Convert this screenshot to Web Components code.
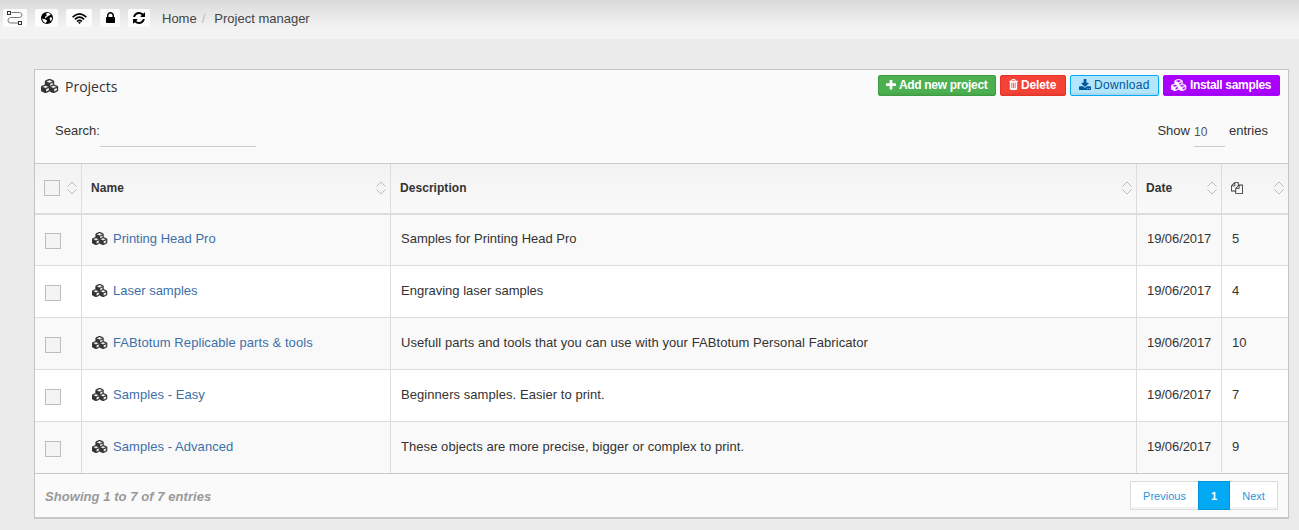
<!DOCTYPE html>
<html lang="en">
<head>
<meta charset="utf-8">
<title>Project manager</title>
<style>
html,body{margin:0;height:100%}
body{background:#ebebeb;font:13px "Liberation Sans",Arial,sans-serif;color:#333;overflow:hidden}
</style>
</head>
<body>
<project-page></project-page>
<script>
const CUBES='M640 1632l384-192v-314l-384 164v342zm-64-454l404-173-404-173-404 173zm1088 454l384-192v-314l-384 164v342zm-64-454l404-173-404-173-404 173zm-448-293l384-165v-266l-384 164v267zm-64-379l441-189-441-189-441 189zm1088 518v416q0 36-19 67t-52 47l-448 224q-25 14-57 14t-57-14l-448-224q-5-2-7-4-2 2-7 4l-448 224q-25 14-57 14t-57-14l-448-224q-33-16-52-47t-19-67v-416q0-38 21.500-70t56.500-48l434-186v-400q0-38 21.500-70t56.500-48l448-192q23-10 50-10t50 10l448 192q35 16 56.500 48t21.500 70v400l434 186q36 16 57 48t21 70z';
const ICONS={
cubes:['0 0 2304 1792',`<path stroke="currentColor" stroke-width="50" d="${CUBES}"/>`],
plus:['192 192 1408 1408','<path d="M1600 736v192q0 40-28 68t-68 28h-416v416q0 40-28 68t-68 28h-192q-40 0-68-28t-28-68v-416h-416q-40 0-68-28t-28-68v-192q0-40 28-68t68-28h416v-416q0-40 28-68t68-28h192q40 0 68 28t28 68v416h416q40 0 68 28t28 68z"/>'],
trash:['192 128 1408 1536','<path d="M704 1376v-704q0-14-9-23t-23-9h-64q-14 0-23 9t-9 23v704q0 14 9 23t23 9h64q14 0 23-9t9-23zm256 0v-704q0-14-9-23t-23-9h-64q-14 0-23 9t-9 23v704q0 14 9 23t23 9h64q14 0 23-9t9-23zm256 0v-704q0-14-9-23t-23-9h-64q-14 0-23 9t-9 23v704q0 14 9 23t23 9h64q14 0 23-9t9-23zm-544-992h448l-48-117q-7-9-17-11h-317q-10 2-17 11zm928 32v64q0 14-9 23t-23 9h-96v948q0 83-47 143.500t-113 60.500h-832q-66 0-113-58.500t-47-141.500v-952h-96q-14 0-23-9t-9-23v-64q0-14 9-23t23-9h309l70-167q15-37 54-63t79-26h320q40 0 79 26t54 63l70 167h309q14 0 23 9t9 23z"/>'],
download:['64 0 1664 1536','<path d="M1344 1344q0-26-19-45t-45-19-45 19-19 45 19 45 45 19 45-19 19-45zm256 0q0-26-19-45t-45-19-45 19-19 45 19 45 45 19 45-19 19-45zm128-224v320q0 40-28 68t-68 28h-1472q-40 0-68-28t-28-68v-320q0-40 28-68t68-28h465l135 136q58 56 136 56t136-56l136-136h464q40 0 68 28t28 68zm-325-569q17 41-14 70l-448 448q-18 19-45 19t-45-19l-448-448q-31-29-14-70 17-39 59-39h256v-448q0-26 19-45t45-19h256q26 0 45 19t19 45v448h256q42 0 59 39z"/>'],
lock:['320 128 1152 1408','<path d="M640 768h512v-192q0-106-75-181t-181-75-181 75-75 181v192zm832 96v576q0 40-28 68t-68 28h-960q-40 0-68-28t-28-68v-576q0-40 28-68t68-28h32v-192q0-184 132-316t316-132 316 132 132 316v192h32q40 0 68 28t28 68z"/>'],
refresh:['128 128 1536 1536','<path d="M1639 1056q0 5-1 7-64 268-268 434.500t-478 166.500q-146 0-282.500-55t-243.500-157l-129 129q-19 19-45 19t-45-19-19-45v-448q0-26 19-45t45-19h448q26 0 45 19t19 45-19 45l-137 137q71 66 161 102t187 36q134 0 250-65t186-179q11-17 53-117 8-23 30-23h192q13 0 22.500 9.500t9.500 22.500zm25-800v448q0 26-19 45t-45 19h-448q-26 0-45-19t-19-45 19-45l138-138q-148-137-349-137-134 0-250 65t-186 179q-11 17-53 117-8 23-30 23h-199q-13 0-22.500-9.500t-9.500-22.500v-7q65-268 270-434.500t480-166.500q146 0 284 55.500t245 156.500l130-129q19-19 45-19t45 19 19 45z"/>'],
files:['0 0 1792 1792','<path d="M1696 384q40 0 68 28t28 68v1216q0 40-28 68t-68 28h-960q-40 0-68-28t-28-68v-288h-544q-40 0-68-28t-28-68v-672q0-40 20-88t48-76l408-408q28-28 76-48t88-20h416q40 0 68 28t28 68v328q68-40 128-40h416zm-544 213l-299 299h299v-299zm-640-384l-299 299h299v-299zm196 647l316-316v-416h-384v416q0 40-28 68t-68 28h-416v640h512v-256q0-40 20-88t48-76zm956 804v-1152h-384v416q0 40-28 68t-68 28h-416v640h896z"/>'],
wifi:['0 0 15 11','<g fill="none" stroke="currentColor" stroke-width="1.6"><path d="M.6 4.200Q7.500-2.400 14.400 4.200"/><path d="M2.900 6.400Q7.500 2 12.100 6.400"/><path d="M5 8.500Q7.500 6.200 10 8.500"/></g><path d="M6 9.500Q7.500 8.500 9 9.500L7.500 11z"/>'],
globe:['0 0 12 12','<circle cx="6" cy="6" r="6"/><path fill="#fff" d="M5.500 1L7.800 1 9.600 2.100 9.200 3.300 7.800 3.400 6.800 4.600 5.600 4.800 5 6.200 3.900 6 4.300 4.600 5.800 3.400 5.200 2.200zM1.200 6.300L2.600 7 4.600 7.400 6 8.600 5.500 10 4.800 11 3 10.300 1.700 8.600zM9.400 5.200L11 5.600 10.800 7.600 9.700 9.200 8.900 7.800 8.600 6.200z"/>'],
head:['0 0 16 16','<g fill="none" stroke="#777"><path d="M4.500 2.500H12.500Q15 3 15 5T12.500 7.500H3.500Q1 8 1 10.500T3.500 13H11"/><rect x=".5" y="1.500" width="3" height="3" stroke="#333"/><rect x="11.500" y="11.500" width="3" height="3" stroke="#333"/></g>'],
sort:['0 0 10 14','<path fill="none" stroke="#bbb" d="M.5 5.500L5 1l4.500 4.500M.5 8.500L5 13l4.500-4.500"/>']
};
const define=(name,css,html)=>customElements.define(name,class extends HTMLElement{
 connectedCallback(){
  if(this.shadowRoot)return;
  const root=this.attachShadow({mode:'open'});
  const t=document.createElement('template');
  t.innerHTML=`<style>*{box-sizing:border-box}:host{box-sizing:border-box}${css}</style>${typeof html==='function'?html(this):html}`;
  root.append(t.content.cloneNode(true));
 }
});
define('ui-icon',':host{display:inline-block;flex:none;line-height:0}svg{display:block;width:100%;height:100%;fill:currentColor}',
 el=>{const [vb,s]=ICONS[el.getAttribute('name')];return `<svg viewBox="${vb}" preserveAspectRatio="none">${s}</svg>`});
define('top-button',':host{display:flex;align-items:center;justify-content:center;height:18px;border-radius:2px;background:#fcfcfc;color:#000}','<slot></slot>');
define('top-bar',`:host{display:flex;height:39px;background:linear-gradient(#dadada,#f3f3f3 70%);padding:9px 0 0 3px;color:#444}
 .b{display:flex;gap:8px}.crumb{display:flex;margin:2px 0 0 12px;line-height:15px;height:15px}.crumb i{color:#bbb;font-style:normal;margin:0 9px 0 5px}`,
 `<div class="b"><top-button style="width:24px"><ui-icon name="head" style="width:16px;height:16px"></ui-icon></top-button>
 <top-button style="width:23px"><ui-icon name="globe" style="width:12px;height:12px"></ui-icon></top-button>
 <top-button style="width:26px"><ui-icon name="wifi" style="width:15px;height:11px"></ui-icon></top-button>
 <top-button style="width:20px"><ui-icon name="lock" style="width:9px;height:11px;margin-top:-1px"></ui-icon></top-button>
 <top-button style="width:22px"><ui-icon name="refresh" style="width:12px;height:12px"></ui-icon></top-button></div>
 <nav class="crumb"><span>Home</span><i>/</i><span>Project manager</span></nav>`);
define('action-button',`:host{display:flex;align-items:center;height:21px;border:1px solid var(--bd);background:var(--bg);color:var(--fg,#fff);border-radius:2px;padding:0 7px 2px;font-size:12px;font-weight:bold;white-space:nowrap;box-shadow:inset 0 -2px rgba(0,0,0,.05)}`,'<slot></slot>');
define('check-box',':host{display:block;width:16px;height:16px;border:1px solid #bdbdbd;background:#f4f4f4}','');
define('sort-mark',':host{display:block;width:10px;height:14px;margin-top:-1px}ui-icon{width:10px;height:14px}','<ui-icon name="sort"></ui-icon>');
const GRID='display:grid;grid-template-columns:47px 309px 746px 85px 66px';
define('table-head',`:host{${GRID};height:52px;border-top:1px solid #cbcbcb;border-bottom:2px solid #ddd;background:linear-gradient(#f2f2f2,#fafafa);font-weight:bold;font-size:12px}
 div{display:flex;align-items:center;justify-content:space-between;padding:0 4px 0 9px;border-right:1px solid #ddd}div:last-child{border:0}check-box{margin-top:-2px}span{margin-top:-1px;letter-spacing:.05px}`,
 `<div><check-box></check-box><sort-mark></sort-mark></div>
 <div><span>Name</span><sort-mark></sort-mark></div><div><span>Description</span><sort-mark></sort-mark></div>
 <div><span>Date</span><sort-mark></sort-mark></div><div><ui-icon name="files" style="width:12px;height:12px;margin-top:-2px"></ui-icon><sort-mark></sort-mark></div>`);
define('project-row',`:host{${GRID};height:52px;border-bottom:1px solid #ddd;background:var(--row,#fff);line-height:16px}
 div{display:flex;padding:var(--top,17px) 0 0 10px;border-right:1px solid #ddd;white-space:nowrap}div:last-child{border:0}check-box{margin-top:2px}
 ui-icon{width:16px;height:13px;margin:1px 5px 0 1px}a{color:#3d70a8}.n{padding-left:9px}.n,.d{letter-spacing:var(--ls,.06px)}.t{letter-spacing:-.08px}`,
 el=>`<div><check-box></check-box></div><div class="n"><ui-icon name="cubes"></ui-icon><a><slot></slot></a></div>
 <div class="d">${el.getAttribute('description')}</div><div class="t">19/06/2017</div><div>${el.getAttribute('files')}</div>`);
define('page-links',`:host{display:flex;height:29px;font-size:11px;color:#2a96e0;background:#fff;border:1px solid #ddd;box-shadow:inset 0 -2px #f2f2f2}
 span{display:flex;align-items:center;justify-content:center}.on{background:#03a9f4;color:#fff;font-weight:bold;width:32px;margin:-1px 0;border:1px solid #0393d8}`,
 '<span style="width:67px">Previous</span><span class="on">1</span><span style="width:47px">Next</span>');
define('project-panel',`:host{display:block;margin:30px 0 0 34px;width:1255px;height:450px;border:1px solid #c4c4c4;border-bottom:2px solid #c8c8c8;background:#fafafa}
 header{display:flex;height:35px;padding:5px 8px 0 6px}.t{display:flex;flex:1;font:14px/24px "Open Sans",sans-serif}.t ui-icon{width:18px;height:14px;margin:4px 6px 0 0}
 .a{display:flex;gap:4px}action-button ui-icon{margin-right:3px}
 .f{display:flex;justify-content:space-between;height:58px;padding:18px 20px 0;line-height:16px}.f>div{display:flex}
 .s{width:156px;height:24px;border-bottom:1px solid #ccc}.l{width:31px;height:24px;border-bottom:1px solid #ccc;margin:0 4px 0 4px;font-size:12px;line-height:18px;color:#555}
 footer{display:flex;justify-content:space-between;padding:7px 10px;color:#999;font-weight:bold;font-style:italic}footer>span{line-height:31px;letter-spacing:.06px}page-links{font-style:normal;font-weight:normal}`,
 `<header><div class="t"><ui-icon name="cubes"></ui-icon><span>Projects</span></div><div class="a">
 <action-button style="--bg:#4caf50;--bd:#3d9a41;width:118px;letter-spacing:-.33px"><ui-icon name="plus" style="width:10px;height:10px"></ui-icon>Add new project</action-button>
 <action-button style="--bg:#f44336;--bd:#e63227;width:66px;padding-left:8px;letter-spacing:-.12px"><ui-icon name="trash" style="width:9px;height:11px"></ui-icon>Delete</action-button>
 <action-button style="--bg:#b3e5fc;--bd:#03a9f4;--fg:#01579b;width:89px;padding-left:8px;font-weight:normal;letter-spacing:.3px"><ui-icon name="download" style="width:12px;height:11px"></ui-icon>Download</action-button>
 <action-button style="--bg:#aa00ff;--bd:#aa00ff;width:117px;letter-spacing:-.33px"><ui-icon name="cubes" style="width:16px;height:12px"></ui-icon>Install samples</action-button></div></header>
 <div class="f"><div><span>Search:</span><span class="s"></span></div><div><span>Show</span><span class="l">10</span><span>entries</span></div></div>
 <table-head></table-head>
 <project-row style="--row:#f9f9f9;--top:16px;--ls:0;height:51px" description="Samples for Printing Head Pro" files="5">Printing Head Pro</project-row>
 <project-row style="--ls:0" description="Engraving laser samples" files="4">Laser samples</project-row>
 <project-row style="--row:#f9f9f9;--ls:.075px" description="Usefull parts and tools that you can use with your FABtotum Personal Fabricator" files="10">FABtotum Replicable parts &amp; tools</project-row>
 <project-row description="Beginners samples. Easier to print." files="7">Samples - Easy</project-row>
 <project-row style="--row:#f9f9f9;border-bottom-color:#c8c8c8" description="These objects are more precise, bigger or complex to print." files="9">Samples - Advanced</project-row>
 <footer><span>Showing 1 to 7 of 7 entries</span><page-links></page-links></footer>`);
define('project-page',':host{display:block}','<top-bar></top-bar><project-panel></project-panel>');
</script>
</body>
</html>
